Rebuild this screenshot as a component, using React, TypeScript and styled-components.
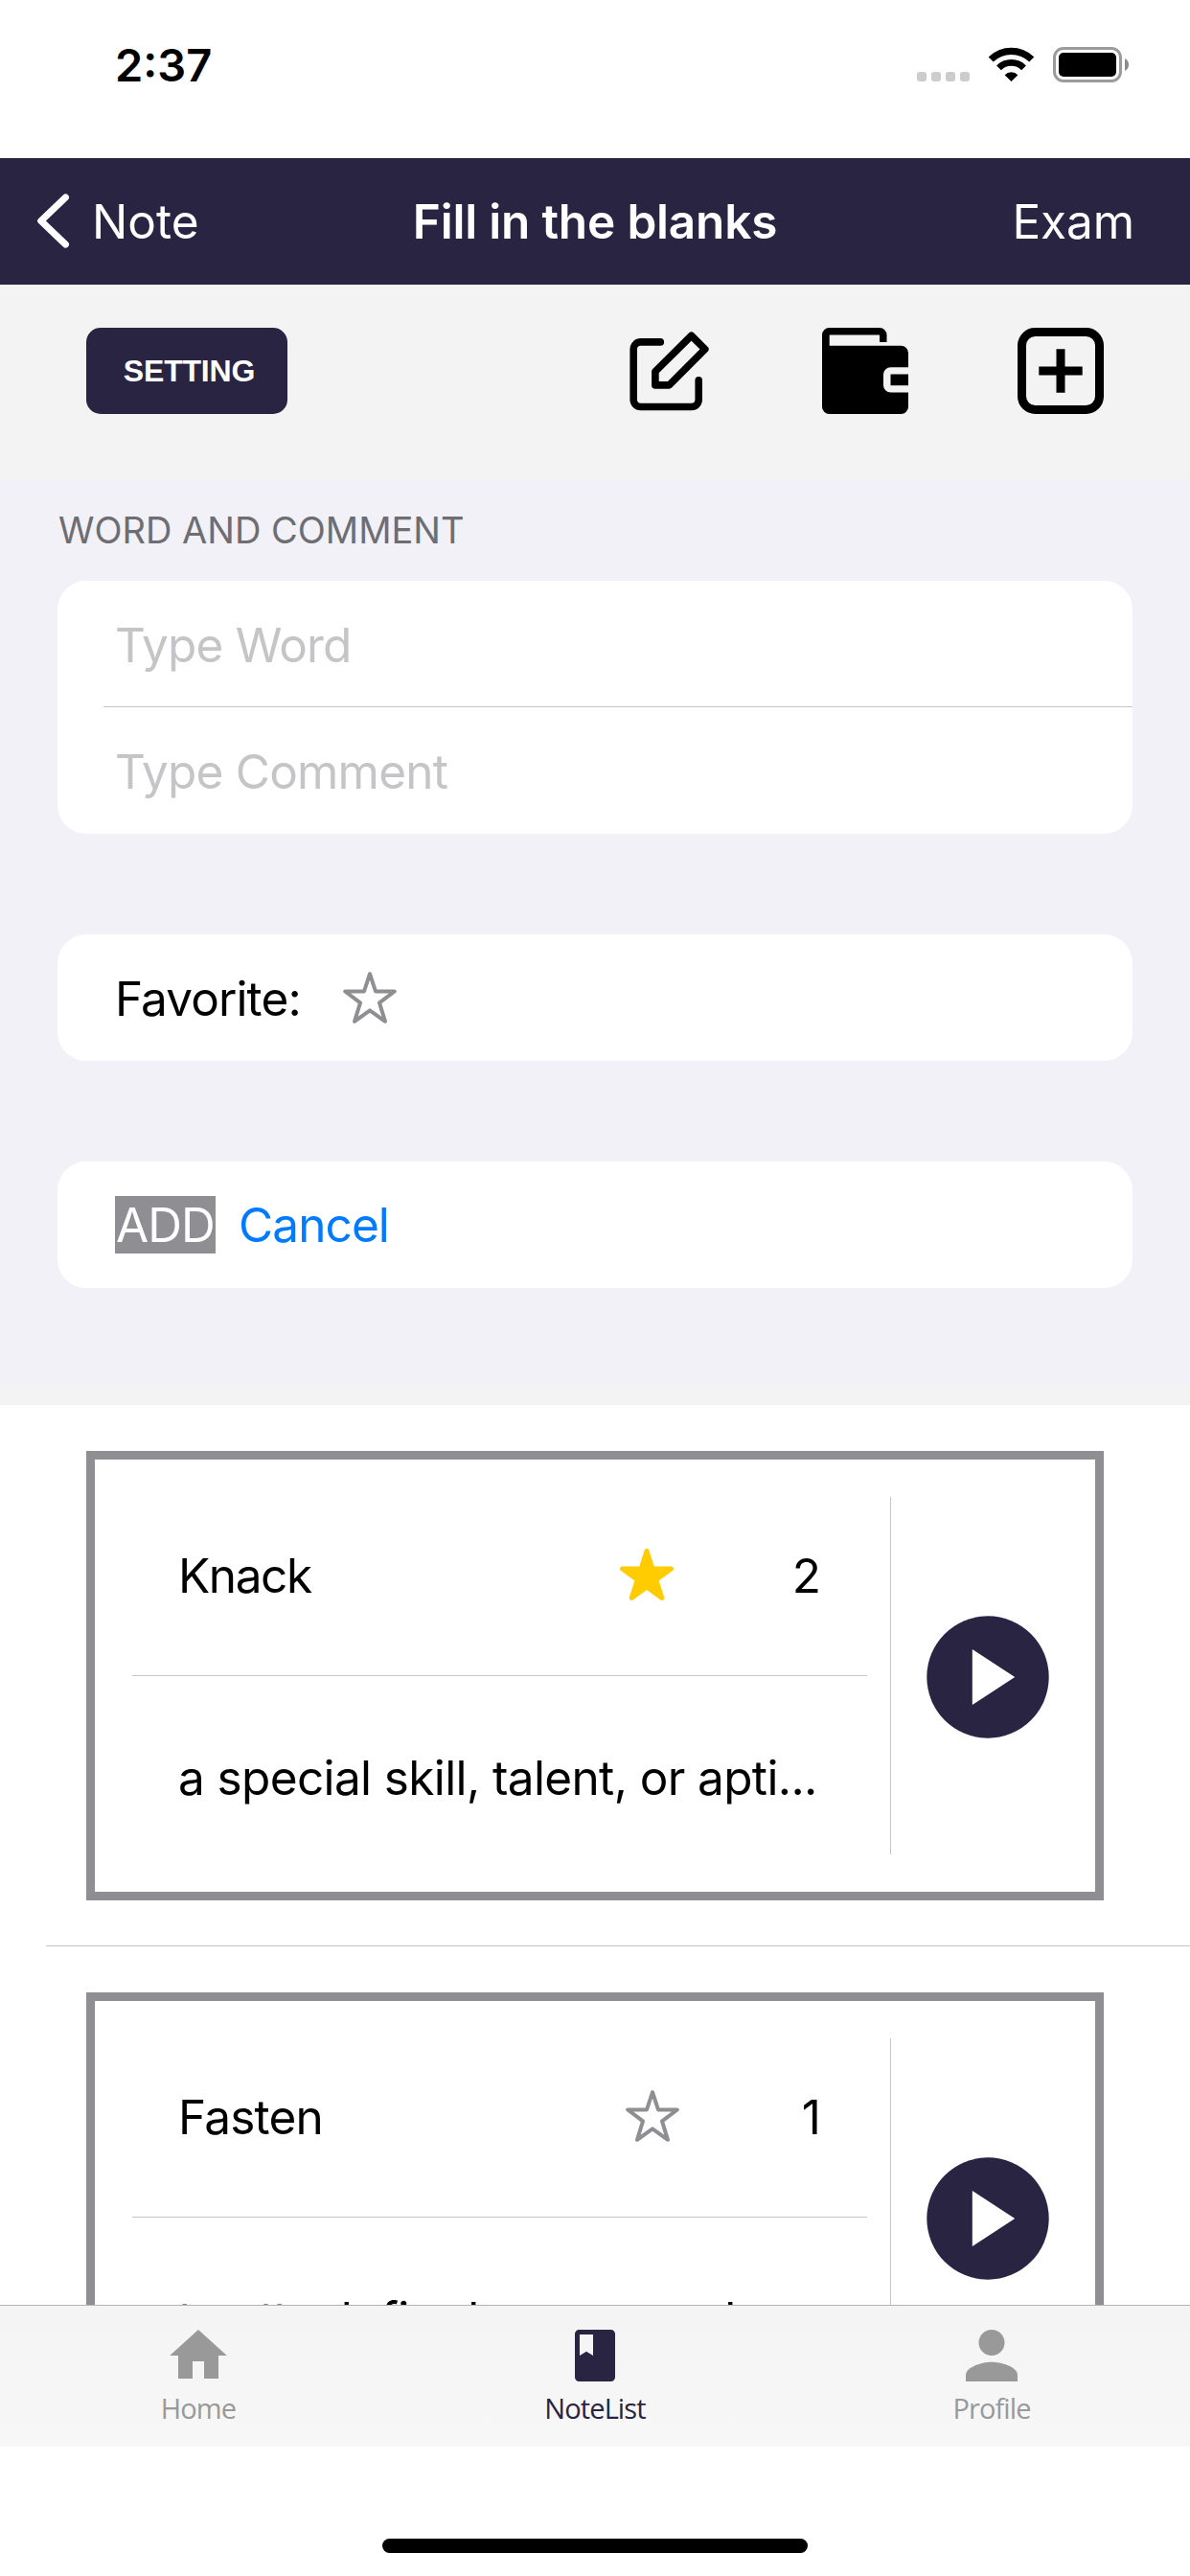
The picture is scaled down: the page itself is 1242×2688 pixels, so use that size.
import React from 'react';
import styled, { createGlobalStyle } from 'styled-components';

const navy = '#282442';
const gray = '#8e8e93';
const hairline = '#c6c6c8';

const GlobalStyle = createGlobalStyle`
  * { box-sizing: border-box; }
  body { margin: 0; background: #fff; }
  button { border: 0; padding: 0; margin: 0; background: none; font: inherit; color: inherit; letter-spacing: inherit; }
  svg { display: block; flex: none; }
`;

const Screen = styled.div`
  width: 1242px;
  height: 2688px;
  display: flex;
  flex-direction: column;
  overflow: hidden;
  background: #fff;
  color: #000;
  font-family: Inter, 'Liberation Sans', sans-serif;
  font-size: 49.5px;
  line-height: 60px;
  white-space: nowrap;
`;

const StatusBar = styled.header`
  height: 165px;
  padding: 0 64px 29px 120px;
  display: flex;
  align-items: center;
`;

const Clock = styled.span`
  margin-right: auto;
  font-size: 47px;
  font-weight: 600;
`;

const StatusIcons = styled.div`
  display: flex;
  gap: 19px;
`;

const NavBar = styled.nav`
  height: 132px;
  padding: 0 58px 0 38px;
  display: grid;
  grid-template-columns: 1fr auto 1fr;
  align-items: center;
  background: ${navy};
  color: #fff;
`;

const BackButton = styled.button`
  display: flex;
  align-items: center;
  gap: 22px;
`;

const Title = styled.h1`
  margin: 0;
  padding-left: 20px;
  font-size: inherit;
  font-weight: 600;
  letter-spacing: -0.18px;
`;

const ExamButton = styled.button`
  justify-self: end;
  letter-spacing: -0.1px;
`;

const Toolbar = styled.div`
  height: 204px;
  padding: 45px 90px 0;
  display: flex;
  align-items: flex-start;
  gap: 114px;
  background: #f3f3f3;
`;

const SettingButton = styled.button`
  width: 210px;
  height: 90px;
  margin-right: auto;
  border-radius: 15px;
  background: ${navy};
  color: #fff;
  font: bold 32px/90px 'Liberation Sans', Arial, sans-serif;
  letter-spacing: -0.2px;
  padding: 0 0 1px 5px;
`;

const Form = styled.form`
  height: 942px;
  padding: 0 60px;
  background: #f2f1f7;
`;

const SectionHeader = styled.h2`
  margin: 0;
  height: 105px;
  line-height: 104px;
  padding-left: 1px;
  font-size: 38px;
  font-weight: 400;
  color: #6d6d72;
`;

const Group = styled.div<{ $gapAfter?: number }>`
  margin-bottom: ${p => p.$gapAfter ?? 0}px;
  border-radius: 30px;
  background: #fff;
  letter-spacing: -0.9px;
`;

const FormRow = styled.div`
  height: 132px;
  padding-left: 60px;
  display: flex;
  align-items: center;
`;

const FieldRow = styled(FormRow)<{ $height: number }>`
  height: ${p => p.$height}px;
  color: #c5c5c7;
  letter-spacing: -0.8px;
`;

const RowText = styled.span`
  padding-top: 2px;
`;

const FavoriteLabel = styled(RowText)`
  margin-right: 44px;
`;

const RowDivider = styled.div`
  height: 1px;
  margin-left: 48px;
  background: ${hairline};
`;

const AddButton = styled.button`
  width: 105px;
  height: 60px;
  margin-right: 24px;
  background: ${gray};
  color: #fff;
  line-height: 60px;
  text-align: center;
`;

const CancelButton = styled.button`
  color: #007aff;
`;

const FormFooter = styled.div`
  height: 23px;
  background: #f3f3f3;
`;

const List = styled.main`
  flex: 1;
  min-height: 0;
  overflow: hidden;
`;

const ListItem = styled.section`
  padding: 48px 90px 0;
`;

const ListDivider = styled.div`
  height: 1px;
  margin: 47px 0 0 -42px;
  width: 1194px;
  background: ${hairline};
`;

const Card = styled.article`
  height: 469px;
  border: 9px solid ${gray};
  padding: 39px;
  display: flex;
`;

const CardBody = styled.div`
  width: 767px;
  display: flex;
  flex-direction: column;
`;

const WordRow = styled.div`
  height: 186px;
  padding: 0 48px 22px;
  display: flex;
  align-items: center;
`;

const Word = styled.span<{ $tracking: number }>`
  margin-right: auto;
  letter-spacing: ${p => p.$tracking}px;
`;

const StarSlot = styled.span<{ $space: number }>`
  margin-right: ${p => p.$space}px;
  padding-bottom: 2px;
`;

const CardDivider = styled.div`
  height: 1px;
  background: ${hairline};
`;

const Comment = styled.div`
  height: 186px;
  padding: 26px 0 0 48px;
  display: flex;
  align-items: center;
  letter-spacing: -0.62px;
`;

const VerticalDivider = styled.div`
  width: 1px;
  margin: 0 24px;
  background: ${hairline};
`;

const PlayColumn = styled.div`
  flex: 1;
  padding: 2px 0 0 3px;
  display: flex;
  align-items: center;
  justify-content: center;
`;

const TabBar = styled.nav`
  height: 148px;
  border-top: 1px solid #b2b2b2;
  display: grid;
  grid-template-columns: repeat(3, 1fr);
  background: linear-gradient(#f4f4f4, #f7f7f7);
`;

const Tab = styled.a<{ $active?: boolean }>`
  padding-top: 25px;
  display: flex;
  flex-direction: column;
  align-items: center;
  gap: 8px;
  color: ${p => (p.$active ? navy : '#999')};
  font: 29px/40px 'Open Sans', 'Noto Sans', sans-serif;
  letter-spacing: -0.9px;
`;

const BottomArea = styled.footer`
  height: 135px;
  padding-top: 96px;
`;

const HomeIndicator = styled.div`
  width: 444px;
  height: 15px;
  margin: 0 auto;
  border-radius: 8px;
  background: #000;
`;

const SignalIcon = () => (
  <svg width="55" height="38" viewBox="0 0 55 38" fill="#ccc">
    {[0, 15, 30, 45].map(x => <rect key={x} x={x} y="26" width="10" height="10" rx="3" />)}
  </svg>
);

const WifiIcon = () => (
  <svg width="49" height="38" viewBox="0 0 49 38">
    <g fill="none" stroke="#000">
      <path d="M3.2 13 A30.5 30.5 0 0 1 45.8 13" strokeWidth="7.2" />
      <path d="M11.5 21.8 A18.4 18.4 0 0 1 37.5 21.8" strokeWidth="6.8" />
    </g>
    <path d="M24.5 36 L17.6 29.2 A9.8 9.8 0 0 1 31.4 29.2 Z" />
  </svg>
);

const BatteryIcon = () => (
  <svg width="79" height="38" viewBox="0 0 79 38">
    <rect x="1.5" y="1.5" width="69" height="34" rx="9.5" fill="none" stroke="#9b9b9b" strokeWidth="3" />
    <rect x="6" y="6" width="60" height="25" rx="5" />
    <path d="M75 12 Q79 14 79 18.5 T75 25 Z" fill="#8c8c8c" />
  </svg>
);

const BackIcon = () => (
  <svg width="36" height="60" viewBox="0 0 36 60" fill="none" stroke="#fff" strokeWidth="7.2" strokeLinecap="round" strokeLinejoin="round">
    <path d="M30.4 5 L4.8 29.5 L30.4 54" />
  </svg>
);

const EditIcon = () => (
  <svg width="90" height="90" viewBox="0 0 90 90" fill="none" stroke="#000" strokeWidth="7.6" strokeLinecap="round" strokeLinejoin="round">
    <path d="M35.3 14.9 H14.7 A7.5 7.5 0 0 0 7.2 22.4 V75 A7.5 7.5 0 0 0 14.7 82.5 H67.7 A7.5 7.5 0 0 0 75.2 75 V54.8" />
    <path d="M67.6 8.2 L81.8 22.4 L44.4 59.9 H29.9 V45.6 Z" />
  </svg>
);

const WalletIcon = () => (
  <svg width="90" height="90" viewBox="0 0 90 90" fillRule="evenodd">
    <path d="M7.5 0 H60 A7.5 7.5 0 0 1 67.5 7.5 V15 H60 V7.6 H7.7 V18.8 H82.5 A7.5 7.5 0 0 1 90 26.3 V41.2 H71.5 A7.5 7.5 0 0 0 64 48.7 V60 A7.5 7.5 0 0 0 71.5 67.5 H90 V82.5 A7.5 7.5 0 0 1 82.5 90 H7.5 A7.5 7.5 0 0 1 0 82.5 V7.5 A7.5 7.5 0 0 1 7.5 0 Z" />
    <rect x="71.5" y="48.5" width="18.5" height="11.7" />
  </svg>
);

const PlusIcon = () => (
  <svg width="90" height="90" viewBox="0 0 90 90" fill="none" stroke="#000" strokeWidth="9">
    <rect x="4.5" y="4.5" width="81" height="81" rx="14" />
    <path d="M45 22.3 V67.7 M22.3 45 H67.7" />
  </svg>
);

const StarIcon = ({ filled = false }: { filled?: boolean }) => (
  <svg
    width="56"
    height="54"
    viewBox="0 0 56 54"
    fill={filled ? '#ffcc00' : 'none'}
    stroke={filled ? '#ffcc00' : gray}
    strokeWidth={filled ? 5 : 4}
    strokeLinejoin="round"
  >
    <path
      d={filled
        ? 'M28 2.5 L33.9 20.9 H53.5 L37.7 32.6 L43.8 51.4 L28 40 L12.2 51.4 L18.3 32.6 L2.5 20.9 H22.1 Z'
        : 'M28 2.2 L34 20.5 H53.8 L38 32.4 L44 51.8 L28 40.4 L12 51.8 L18 32.4 L2.2 20.5 H22 Z'}
    />
  </svg>
);

const PlayIcon = () => (
  <svg width="128" height="128" viewBox="-64 -64 128 128">
    <circle r="63.7" fill={navy} />
    <path d="M-16.2 -29 L28.2 0 L-16.2 29 Z" fill="#fff" />
  </svg>
);

const HouseIcon = () => (
  <svg width="60" height="54" viewBox="0 0 60 54" fill="currentColor">
    <path d="M30 0 L59.8 27 H51 V51 H36 V33 H24 V51 H9 V27 H0.2 Z" />
  </svg>
);

const NoteIcon = () => (
  <svg width="60" height="54" viewBox="0 0 60 54" fill="currentColor" fillRule="evenodd">
    <path d="M13.5 0 H46.5 A4.5 4.5 0 0 1 51 4.5 V49.5 A4.5 4.5 0 0 1 46.5 54 H13.5 A4.5 4.5 0 0 1 9 49.5 V4.5 A4.5 4.5 0 0 1 13.5 0 Z M14 5 V27 L21 22.8 L28 27 V5 Z" />
  </svg>
);

const PersonIcon = () => (
  <svg width="60" height="54" viewBox="0 0 60 54" fill="currentColor">
    <circle cx="30" cy="13.5" r="13.5" />
    <path d="M3 54 V47.2 C3 38.3 21 33.7 30 33.7 S57 38.3 57 47.2 V54 Z" />
  </svg>
);

const words = [
  { word: 'Knack', tracking: -1.4, favorite: true, count: 2, comment: 'a special skill, talent, or apti...' },
  { word: 'Fasten', tracking: -0.8, favorite: false, count: 1, comment: 'to attach firmly or securely...' },
];

export default function App() {
  return (
    <Screen>
      <GlobalStyle />
      <StatusBar>
        <Clock>2:37</Clock>
        <StatusIcons>
          <SignalIcon />
          <WifiIcon />
          <BatteryIcon />
        </StatusIcons>
      </StatusBar>

      <NavBar>
        <BackButton>
          <BackIcon />
          Note
        </BackButton>
        <Title>Fill in the blanks</Title>
        <ExamButton>Exam</ExamButton>
      </NavBar>

      <Toolbar>
        <SettingButton>SETTING</SettingButton>
        <EditIcon />
        <WalletIcon />
        <PlusIcon />
      </Toolbar>

      <Form>
        <SectionHeader>WORD AND COMMENT</SectionHeader>
        <Group $gapAfter={105}>
          <FieldRow $height={131}><RowText>Type Word</RowText></FieldRow>
          <RowDivider />
          <FieldRow $height={132}><RowText>Type Comment</RowText></FieldRow>
        </Group>
        <Group $gapAfter={105}>
          <FormRow>
            <FavoriteLabel>Favorite:</FavoriteLabel>
            <StarIcon />
          </FormRow>
        </Group>
        <Group>
          <FormRow>
            <AddButton type="button">ADD</AddButton>
            <CancelButton type="button">Cancel</CancelButton>
          </FormRow>
        </Group>
      </Form>
      <FormFooter />

      <List>
        {words.map(w => (
          <ListItem key={w.word}>
            <Card>
              <CardBody>
                <WordRow>
                  <Word $tracking={w.tracking}>{w.word}</Word>
                  <StarSlot $space={w.favorite ? 124 : 128}>
                    <StarIcon filled={w.favorite} />
                  </StarSlot>
                  <span>{w.count}</span>
                </WordRow>
                <CardDivider />
                <Comment>{w.comment}</Comment>
              </CardBody>
              <VerticalDivider />
              <PlayColumn>
                <PlayIcon />
              </PlayColumn>
            </Card>
            <ListDivider />
          </ListItem>
        ))}
      </List>

      <TabBar>
        <Tab><HouseIcon />Home</Tab>
        <Tab $active><NoteIcon />NoteList</Tab>
        <Tab><PersonIcon />Profile</Tab>
      </TabBar>
      <BottomArea>
        <HomeIndicator />
      </BottomArea>
    </Screen>
  );
}
